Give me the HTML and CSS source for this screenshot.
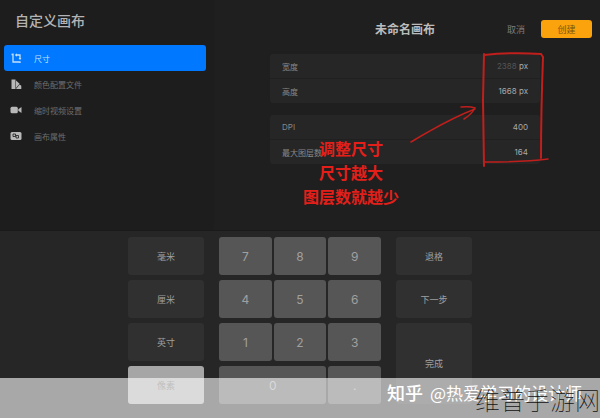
FILE: index.html
```html
<!DOCTYPE html>
<html lang="zh-CN">
<head>
    <meta charset="utf-8">
    <title>自定义画布</title>
    <link rel="stylesheet" href="styles.css">
</head>
<body>
    <div class="top">
        <aside class="sidebar">
            <h1>自定义画布</h1>
            <nav>
                <button class="nav-item active">
                    <svg viewBox="0 0 12 12"><path d="M3 1.500V10h7.500M1.500 2.500H3M5.500 3H10v4.500M10 9.500V11" fill="none" stroke="currentColor" stroke-width="1.300"/><path d="M5 3L7 1.300v3.400zM10 7.500L8.500 6h3z" fill="currentColor"/></svg>
                    尺寸
                </button>
                <button class="nav-item">
                    <svg viewBox="0 0 12 12"><path d="M1.500 1.500h4v9.500h-4zM6 2.500l3.600 3.200L6 10zM9.600 6.500l1.700 1.200V11H6z" fill="currentColor"/></svg>
                    颜色配置文件
                </button>
                <button class="nav-item">
                    <svg viewBox="0 0 12 12"><rect x="0.500" y="2.800" width="7.300" height="6.400" rx="1.500" fill="currentColor"/><path d="M8.300 5.300L11.500 3v6L8.300 6.800z" fill="currentColor"/></svg>
                    缩时视频设置
                </button>
                <button class="nav-item">
                    <svg viewBox="0 0 12 12"><rect x="0.500" y="2" width="11" height="8" rx="1.500" fill="currentColor"/><path d="M3 4h2.500v2.500H3zM6 5.500h2.500V8H6z" fill="none" stroke="#1d1d1d" stroke-width="0.800"/></svg>
                    画布属性
                </button>
            </nav>
        </aside>

        <main class="panel">
            <header class="panel-header">
                <h2>未命名画布</h2>
                <button class="cancel">取消</button>
                <button class="create">创建</button>
            </header>

            <form class="fields">
                <div class="group">
                    <label class="row">宽度 <span class="value"><input class="muted" value="2388"> px</span></label>
                    <label class="row">高度 <span class="value"><input value="1668"> px</span></label>
                </div>
                <div class="group">
                    <label class="row">DPI <span class="value"><input value="400"></span></label>
                    <label class="row">最大图层数 <span class="value"><input value="164"></span></label>
                </div>
            </form>

            <svg class="marks" viewBox="0 0 386 231" fill="none" stroke="#c01f1c" stroke-linecap="round">
                <path d="M270 54L269 100L270 166" stroke-width="2"/>
                <path d="M270 55Q298 52 327 54L329 57Q327 110 327 158" stroke-width="2"/>
                <path d="M270 162Q310 162 334 159" stroke-width="1.500"/>
                <path d="M197 142Q235 119 261 109M247 107Q256 106 261 108Q258 114 250 119" stroke-width="1.500"/>
            </svg>
            <p class="note">调整尺寸<br>尺寸越大<br>图层数就越少</p>
        </main>
    </div>

    <section class="keypad">
        <div class="keys units">
            <button>毫米</button>
            <button>厘米</button>
            <button>英寸</button>
            <button class="selected">像素</button>
        </div>
        <div class="keys numbers">
            <button>7</button>
            <button>8</button>
            <button>9</button>
            <button>4</button>
            <button>5</button>
            <button>6</button>
            <button>1</button>
            <button>2</button>
            <button>3</button>
            <button class="zero">0</button>
            <button>.</button>
        </div>
        <div class="keys actions">
            <button>退格</button>
            <button>下一步</button>
            <button class="done">完成</button>
        </div>
    </section>

    <div class="watermark">
        <span class="credit"><b>知乎</b>@热爱学习的设计师</span>
        <span class="site">维普手游网</span>
    </div>
</body>
</html>
```
FILE: styles.css
```css
* {
    box-sizing: border-box;
}
body {
    position: relative;
    margin: 0;
    min-height: 100vh;
    background: #262626;
    color: #a0a0a0;
    font-family: Inter, "Noto Sans CJK SC", sans-serif;
    font-size: 8px;
    overflow: hidden;
}
h1, h2, p {
    margin: 0;
}
button, input {
    border: none;
    padding: 0;
    background: none;
    color: inherit;
    font: inherit;
}
button {
    cursor: pointer;
}
.top {
    display: grid;
    grid-template-columns: 214fr 386fr;
    background: #1f1f1f;
    border-bottom: 1px solid #1a1a1a;
}

/* sidebar */
.sidebar {
    padding: 11px 8px 0 4px;
    background: #1d1d1d;
}
h1 {
    padding-left: 11px;
    margin-bottom: 14px;
    font-size: 14px;
    font-weight: 500;
    line-height: 20px;
    color: #b4b4b4;
}
.nav-item {
    display: flex;
    align-items: center;
    gap: 12px;
    width: 100%;
    height: 26px;
    padding-left: 6px;
    border-radius: 3px;
    color: #6e6e6e;
}
.nav-item svg {
    width: 12px;
    height: 12px;
    color: #b8b8b8;
}
.nav-item.active,
.nav-item.active svg {
    color: #c4e0ff;
}
.nav-item.active {
    background: #0078ff;
}

/* canvas settings */
.panel {
    position: relative;
    padding: 20px 8px 54px 56px;
}
.panel-header {
    display: flex;
    align-items: center;
    gap: 16px;
    height: 18px;
    margin-bottom: 16px;
}
h2 {
    flex: 1;
    padding: 2px 0 0 105px;
    font-size: 12px;
    font-weight: 700;
    line-height: 18px;
    color: #bcbcbc;
}
.cancel {
    font-size: 9px;
    color: #7c7c7c;
}
.create {
    width: 51px;
    height: 18px;
    border-radius: 3px;
    background: #fba30c;
    color: #7a5210;
    font-size: 9px;
}
.fields {
    margin-right: 52px;
}
.group {
    margin-bottom: 12px;
    border-radius: 3px;
    background: #262626;
}
.row {
    display: flex;
    align-items: center;
    justify-content: space-between;
    height: 24px;
    padding: 0 12px;
    color: #888;
}
.row + .row {
    height: 25px;
    border-top: 1px solid #202020;
}
.value {
    color: #a8a8a8;
}
.value input {
    width: 24px;
    text-align: right;
}
.value .muted {
    color: #555;
}

/* hand drawn notes */
.marks {
    position: absolute;
    left: 0;
    top: 0;
    width: 100%;
}
.note {
    position: absolute;
    left: 89px;
    top: 137px;
    color: #e41f1a;
    font-size: 16px;
    font-weight: 700;
    line-height: 24px;
    text-align: center;
}

/* keypad */
.keypad {
    display: flex;
    justify-content: center;
    gap: 15px;
    padding: 6px 0 14px;
}
.keys {
    display: grid;
    grid-template-rows: repeat(4, 38px);
    gap: 5px 2px;
}
.keys button {
    border-radius: 3px;
    background: #303030;
    font-size: 9px;
}
.units, .actions {
    width: 76px;
}
.numbers {
    width: 162px;
    grid-template-columns: repeat(3, 1fr);
}
.keys.numbers button {
    background: #565656;
    font-size: 12px;
}
.zero {
    grid-column: span 2;
}
.done {
    grid-row: span 2;
}
.keys .selected {
    background: #a6a6a6;
    color: #606060;
}

/* watermark strip */
.watermark {
    position: absolute;
    left: 0;
    right: 0;
    bottom: 0;
    height: 40px;
    background: rgba(255, 255, 255, 0.6);
    white-space: nowrap;
    font-family: "Noto Sans CJK SC", sans-serif;
}
.credit {
    position: absolute;
    right: 18px;
    top: 1px;
    color: #fff;
    font-size: 17px;
    line-height: 26px;
}
.credit b {
    margin-right: 7px;
    font-size: 18px;
    font-weight: 500;
}
.site {
    position: absolute;
    right: 0;
    top: 5px;
    color: #111;
    font-size: 25px;
    font-weight: 100;
    line-height: 32px;
}
```
